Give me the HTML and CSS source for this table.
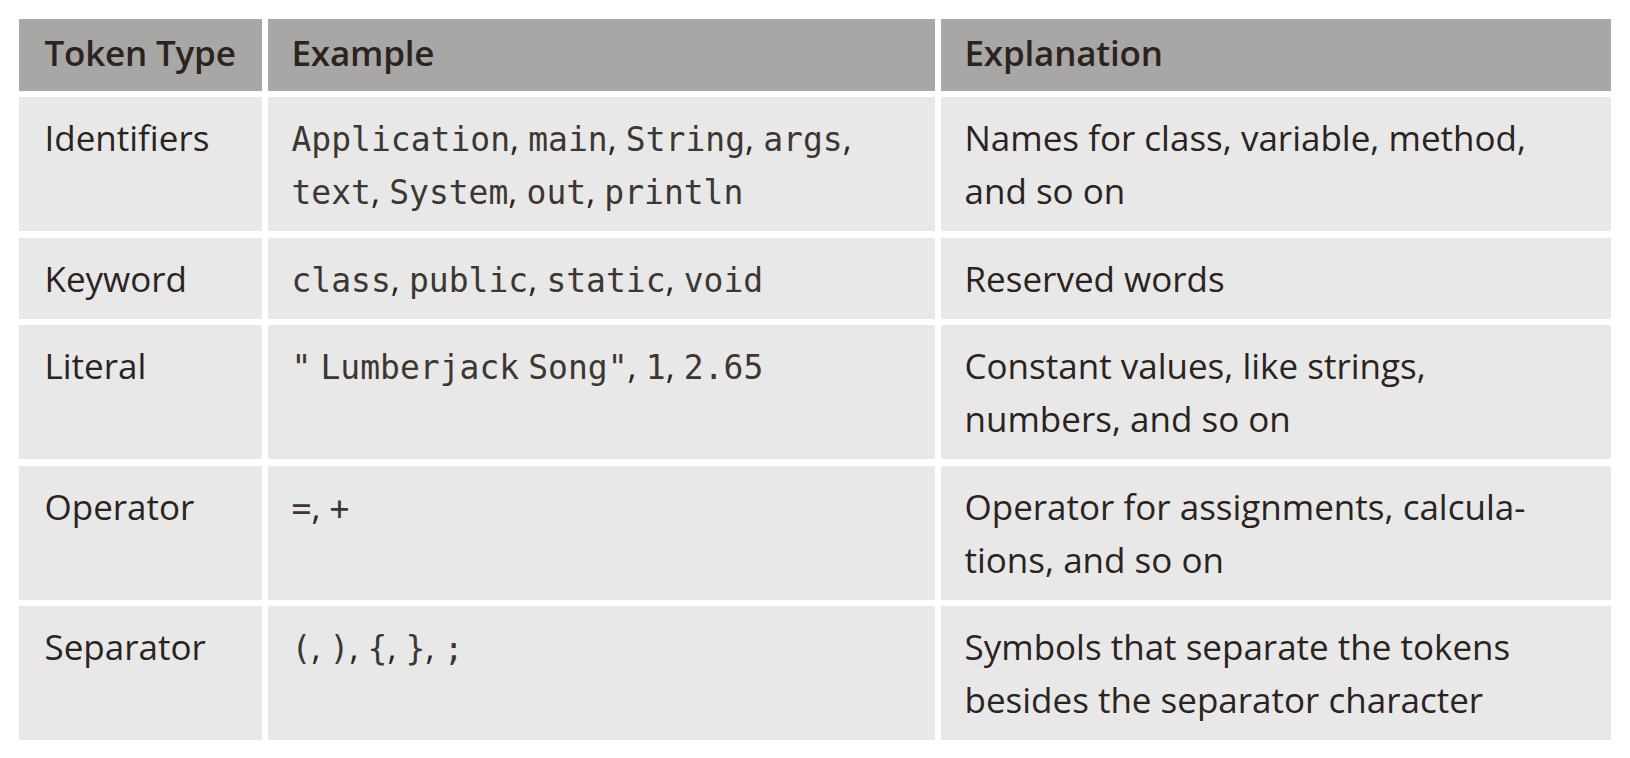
FILE: index.html
```html
<!DOCTYPE html>
<html lang="en">
<head>
<meta charset="utf-8">
<title>Token Types</title>
<link rel="stylesheet" href="styles.css">
</head>
<body>
<div class="tokens">
  <div class="cell head first">Token Type</div>
  <div class="cell head">Example</div>
  <div class="cell head">Explanation</div>

  <div class="cell first">Identifiers</div>
  <div class="cell"><code>Application</code>, <code>main</code>, <code>String</code>, <code>args</code>,<br><code>text</code>, <code>System</code>, <code>out</code>, <code>println</code></div>
  <div class="cell">Names for class, variable, method,<br>and so on</div>

  <div class="cell first">Keyword</div>
  <div class="cell"><code>class</code>, <code>public</code>, <code>static</code>, <code>void</code></div>
  <div class="cell">Reserved words</div>

  <div class="cell first">Literal</div>
  <div class="cell"><code>"</code> <code>Lumberjack</code> <code>Song"</code>, <code>1</code>, <code>2.65</code></div>
  <div class="cell">Constant values, like strings,<br>numbers, and so on</div>

  <div class="cell first">Operator</div>
  <div class="cell"><code>=</code>, <code>+</code></div>
  <div class="cell">Operator for assignments, calcula-<br>tions, and so on</div>

  <div class="cell first">Separator</div>
  <div class="cell"><code>(</code>, <code>)</code>, <code>{</code>, <code>}</code>, <code>;</code></div>
  <div class="cell">Symbols that separate the tokens<br>besides the separator character</div>
</div>
</body>
</html>
```

FILE: styles.css
```css
html, body {
  margin: 0;
  padding: 0;
  background: #ffffff;
}

body {
  font-family: "Open Sans", "Noto Sans", sans-serif;
  font-size: 35px;
  line-height: 53px;
  color: #2b231e;
}

.tokens {
  display: grid;
  grid-template-columns: 243px 667px 670px;
  column-gap: 6px;
  row-gap: 6.5px;
  margin: 18.7px 0 0 18.5px;
  width: 1592px;
}

.cell {
  background: #e8e8e8;
  padding: 14px 20px 14px 24px;
  white-space: nowrap;
}

.cell.first {
  padding-left: 26px;
}

.cell.head {
  background: #a8a7a5;
  font-weight: 600;
  letter-spacing: -0.2px;
  padding-top: 7px;
  padding-bottom: 12px;
}

code {
  font-family: "DejaVu Sans Mono", "Liberation Mono", monospace;
  font-size: 33px;
  line-height: 1;
  color: #3e3631;
}
```
